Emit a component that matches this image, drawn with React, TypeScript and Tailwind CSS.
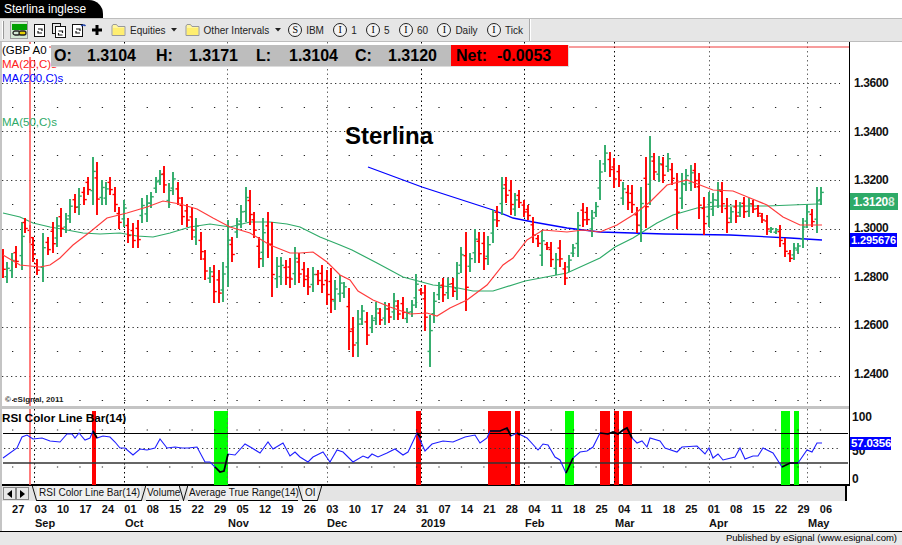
const GREEN = "#2eaa68"
const RED = "#ff0000"
const BLUE = "#0000ff"

// bars in page pixels: colour, x, top, bottom
const bars: [string, number, number, number][] = [
  ["R",3,249,278],["G",7,262,283],["G",12,253,278],["R",16,246,268],["G",22,222,270],["R",25,218,233],["R",30,225,243],
  ["R",33,237,262],["R",37,259,275],["G",43,233,282],["R",48,237,255],["R",53,222,253],["G",57,217,247],["R",61,208,237],
  ["G",66,213,233],["G",70,199,223],["R",75,194,213],["G",79,188,215],["R",84,187,205],["R",88,177,195],["G",93,157,205],
  ["R",97,162,215],["G",102,180,205],["G",106,182,205],["R",110,177,195],["R",115,187,212],["R",119,207,229],["G",124,200,227],
  ["R",128,218,243],["R",133,223,248],["R",138,220,248],["G",142,198,223],["G",147,195,222],["G",151,192,208],["G",156,177,193],
  ["G",160,170,185],["R",164,166,193],["G",169,183,208],["G",173,172,195],["R",178,182,205],["R",182,197,225],["R",187,204,227],
  ["R",192,207,240],["G",196,218,245],["R",201,232,260],["R",205,250,280],["G",210,267,283],["R",214,265,303],["R",219,270,303],
  ["G",223,262,302],["G",228,220,287],["R",232,237,262],["G",237,218,238],["G",241,205,228],["G",246,187,222],["R",250,190,225],
  ["R",254,212,238],["R",259,237,268],["G",263,218,267],["R",268,212,258],["R",272,222,297],["G",277,257,288],["G",281,257,285],
  ["R",286,260,285],["R",290,258,288],["G",295,247,285],["R",299,253,283],["R",304,262,287],["R",308,268,295],["G",313,267,292],
  ["R",318,270,285],["R",322,265,293],["R",327,270,305],["R",331,268,313],["G",335,280,310],["G",340,275,302],["G",344,282,298],
  ["R",349,288,350],["R",353,317,357],["G",358,310,357],["G",362,305,325],["R",367,312,345],["G",372,315,333],["G",376,302,325],
  ["R",380,308,325],["G",385,302,325],["R",389,303,323],["G",394,293,320],["R",398,300,320],["R",403,297,319],["G",407,308,323],
  ["G",412,300,317],["G",416,274,308],["R",421,288,295],["R",425,285,331],["G",430,315,367],["G",434,292,323],["G",439,282,300],
  ["R",443,278,302],["G",448,278,299],["R",453,278,297],["G",457,262,300],["G",461,247,273],["R",466,232,311],["G",470,253,272],
  ["G",475,229,263],["R",479,232,263],["R",484,232,270],["G",488,236,265],["G",493,210,243],["R",497,206,227],["G",502,177,215],
  ["R",506,177,203],["R",511,180,215],["G",515,193,216],["R",519,190,208],["R",524,200,217],["R",528,205,220],["R",533,217,243],
  ["R",538,235,247],["G",542,230,266],["R",547,242,250],["R",551,242,267],["G",556,253,275],["R",560,240,267],["R",565,262,285],
  ["G",569,255,272],["G",573,244,257],["G",578,212,257],["R",583,203,227],["R",587,207,225],["G",592,210,237],["G",596,202,217],
  ["G",600,160,200],["G",605,145,172],["R",610,152,177],["R",614,158,188],["R",619,165,187],["G",623,182,205],["R",628,185,210],
  ["R",632,185,213],["R",637,207,233],["G",641,187,242],["R",646,157,228],["G",650,136,205],["R",654,153,180],["G",659,156,182],
  ["R",663,157,183],["G",668,153,172],["R",672,163,185],["R",677,173,229],["G",682,173,209],["G",686,169,191],["G",691,165,191],
  ["R",695,163,188],["R",699,173,219],["R",704,197,235],["G",709,192,227],["G",713,193,216],["G",718,182,208],["R",722,182,213],
  ["R",727,198,233],["G",731,207,223],["R",736,200,223],["G",740,202,217],["R",744,197,218],["G",749,198,217],["R",753,200,213],
  ["R",758,205,217],["R",762,213,223],["R",767,215,235],["G",771,227,233],["G",776,228,234],["R",780,225,247],["R",785,238,257],
  ["R",790,250,262],["G",794,243,260],["G",798,243,253],["G",803,218,248],["G",807,205,228],["R",812,209,227],["G",817,187,233],
  ["G",821,187,205],
]

const ma20 = "3,255 20,265 40,267 50,265 60,258 73,245 90,232 107,218 127,213 147,207 163,201 180,204 197,209 213,218 230,227 250,233 270,245 290,253 300,253 313,252 327,262 340,275 350,280 358,291 373,300 390,307 410,314 427,313 437,316 450,308 467,300 487,285 503,265 513,258 527,240 543,230 567,232 583,230 600,232 617,225 633,215 650,202 667,185 687,180 700,185 713,190 733,191 750,198 767,205 783,217 800,225 822,225"
const ma50 = "3,213 20,217 33,223 50,227 67,230 83,233 100,234 120,233 137,236 153,237 170,233 190,227 210,224 230,227 250,222 270,222 287,224 300,227 320,237 340,245 352,250 377,263 403,277 433,285 453,287 473,291 493,291 525,281 567,273 600,258 615,247 633,238 657,223 673,215 697,208 717,206 767,206 817,204 822,204"
const ma200 = "368,167 422,187 493,210 513,218 533,222 567,228 600,232 665,234 730,235 790,238 822,240"

const rsi = "3,458 17,448 22,437 27,435 33,439 42,438 50,441 60,442 67,434 72,434 75,438 79,433 85,440 90,438 93,431 97,438 103,436 110,437 115,442 120,448 125,448 133,455 140,449 147,450 155,448 160,439 167,448 175,447 182,448 188,448 197,447 205,462 210,462 215,467 220,472 224,471 228,454 235,455 245,444 252,448 260,453 268,442 273,449 283,443 290,456 295,452 300,457 308,462 313,457 323,452 330,462 337,450 343,452 353,462 363,456 368,458 372,454 378,457 387,453 395,449 403,455 408,452 417,433 425,451 432,444 443,441 453,442 465,437 475,435 480,443 487,438 490,431 500,431 507,428 511,436 517,433 527,438 538,450 543,444 548,445 555,457 560,460 566,473 573,458 580,452 587,451 593,447 600,433 608,434 613,432 618,434 627,428 632,438 637,443 642,441 647,447 650,438 660,441 665,448 677,452 682,447 697,446 705,454 709,448 713,458 718,454 723,460 735,457 740,448 745,459 753,456 758,456 763,448 773,453 782,467 790,463 798,463 807,450 812,452 817,443 822,443"
const rsiBlack = [
  "93,431 97,438",
  "215,467 220,472 224,471 228,454",
  "417,433 421,438",
  "490,431 500,431 507,428 511,436",
  "517,433 520,435",
  "566,473 573,458",
  "600,433 608,434 613,432 618,434 623,430 627,428 632,438",
  "782,467 790,463 798,463",
]

const verticals: [number, string][] = [[34,"#000"],[124,"#000"],[227,"#666"],[327,"#666"],[421,"#000"],[524,"#000"],[614,"#000"],[709,"#666"],[807,"#666"]]
const majors = [83, 131, 180, 229, 277, 327, 376]
const minors = [107, 155, 204, 253, 302, 351, 400]
const shades: [number, number, string][] = [
  [92,4,RED],[214,14,"#00ff00"],[416,5,RED],[488,23,RED],[515,5,RED],[565,9,"#00ff00"],[600,10,RED],[614,5,RED],[623,9,RED],[781,9,"#00ff00"],[794,5,"#00ff00"],
]

const prices = ["1.3600","1.3400","1.3200","1.3000","1.2800","1.2600","1.2400"]
const dates = ["27","03","10","17","24","01","08","15","22","29","05","12","19","26","03","10","17","24","31","07","14","21","28","04","11","18","25","04","11","18","25","01","08","15","22","29","06"]
const months = [
  { label: "Sep", w: "w-[90px]" },
  { label: "Oct", w: "w-[103px]" },
  { label: "Nov", w: "w-[99px]" },
  { label: "Dec", w: "w-[94px]" },
  { label: "2019", w: "w-[104px]" },
  { label: "Feb", w: "w-[90px]" },
  { label: "Mar", w: "w-[94px]" },
  { label: "Apr", w: "w-[99px]" },
  { label: "May", w: "w-[60px]" },
]

function MainPlot() {
  return (
    <svg width={847} height={364} viewBox="2 42 847 364" className="block">
      {majors.map((y) => (
        <line key={y} x1={2} x2={840} y1={y + 0.5} y2={y + 0.5} stroke="#333" strokeDasharray="1.3 3.2" />
      ))}
      {minors.map((y) => (
        <line key={y} x1={12} x2={824} y1={y + 0.5} y2={y + 0.5} stroke="#222" strokeDasharray="1.3 21.14" />
      ))}
      {verticals.map(([x, c]) => (
        <line key={x} x1={x + 0.5} x2={x + 0.5} y1={42} y2={406} stroke={c} strokeDasharray="1.5 3" />
      ))}
      <line x1={2} x2={849} y1={47} y2={47} stroke="#f03a3a" strokeWidth={1.2} />
      <polyline points={ma50} fill="none" stroke={GREEN} strokeWidth={1.2} />
      <polyline points={ma200} fill="none" stroke={BLUE} strokeWidth={1.3} />
      {bars.map(([c, x, top, bottom], i) => {
        const h = bottom - top
        const col = c === "G" ? GREEN : RED
        const openY = c === "G" ? bottom - h * 0.3 : top + h * 0.3
        const closeY = c === "G" ? top + h * 0.3 : bottom - h * 0.3
        return (
          <g key={i} stroke={col}>
            <line x1={x} x2={x} y1={top} y2={bottom} strokeWidth={1.9} />
            <line x1={x - 2.5} x2={x} y1={openY} y2={openY} strokeWidth={1.4} />
            <line x1={x} x2={x + 2.8} y1={closeY} y2={closeY} strokeWidth={1.4} />
          </g>
        )
      })}
      <polyline points={ma20} fill="none" stroke="#ff3b3b" strokeWidth={1.2} />
      <line x1={30} x2={30} y1={42} y2={406} stroke="#ff5a5a" strokeWidth={1.6} />
    </svg>
  )
}

function RsiPlot() {
  return (
    <svg width={847} height={80} viewBox="2 406 847 80" className="block">
      {shades.map(([x, w, c]) => (
        <rect key={x} x={x} y={411} width={w} height={74} fill={c} />
      ))}
      {verticals.map(([x, c]) => (
        <line key={x} x1={x + 0.5} x2={x + 0.5} y1={409} y2={485} stroke={c} strokeDasharray="1.5 3" />
      ))}
      <line x1={30} x2={30} y1={409} y2={485} stroke="#ff5a5a" strokeWidth={1.6} />
      <line x1={12} x2={824} y1={430} y2={430} stroke="#222" strokeDasharray="1.3 21.14" />
      <line x1={12} x2={824} y1={467} y2={467} stroke="#222" strokeDasharray="1.3 21.14" />
      <line x1={4} x2={840} y1={448.5} y2={448.5} stroke="#333" strokeDasharray="1.3 3.2" />
      <line x1={3} x2={848} y1={433.5} y2={433.5} stroke="#000" />
      <line x1={3} x2={848} y1={463} y2={463} stroke="#333" strokeWidth={1.4} />
      <polyline points={rsi} fill="none" stroke="#1f1fff" strokeWidth={1.1} />
      {rsiBlack.map((p) => (
        <polyline key={p} points={p} fill="none" stroke="#000" strokeWidth={1.7} />
      ))}
    </svg>
  )
}

function Folder() {
  return (
    <svg width={15} height={14} viewBox="0 0 15 14">
      <path d="M1 3 L1 12.5 L14 12.5 L14 3.5 L7 3.5 L5.5 1.5 L2 1.5 Z" fill="#fff6a0" stroke="#9a9a9a" />
      <rect x={2} y={5} width={11} height={7} fill="#ffee70" />
    </svg>
  )
}

function Caret() {
  return (
    <svg width={6} height={4} viewBox="0 0 6 4">
      <path d="M0 0 H6 L3 3.5 Z" fill="#222" />
    </svg>
  )
}

function DocIcon({ stacked, tag }: { stacked?: boolean; tag?: boolean }) {
  return (
    <svg width={15} height={15} viewBox="0 0 15 15" fill="none" stroke="#111">
      {stacked && <rect x={0.5} y={0.5} width={8} height={10} fill="#e8e8e8" />}
      <rect x={stacked ? 3.5 : 1.5} y={stacked ? 3.5 : 1.5} width={10} height={stacked ? 11 : 12} fill="#fff" />
      <path d="M5 6 L9 6 L9 8 M9 10 L5 10 L5 8" strokeWidth={1.2} transform={stacked ? "translate(1.5,2)" : ""} />
      {tag && <path d="M10 3 Q13 1 14.5 3" stroke="#2244aa" strokeWidth={1.4} />}
    </svg>
  )
}

function CircleBtn({ ch, label }: { ch: string; label: string }) {
  return (
    <div className="flex items-center gap-[4px]">
      <div className="flex h-[14px] w-[14px] items-center justify-center rounded-full border border-[#222] bg-[#f4f4f4] font-['Liberation_Serif',serif] text-[10px] leading-none text-black">
        {ch}
      </div>
      <span className="text-[10px] text-[#222]">{label}</span>
    </div>
  )
}

function Toolbar() {
  return (
    <div className="flex h-[24px] items-center border-y border-[#bdbdbd] bg-[#e6e6e6] pl-[2px]">
      <div className="h-[18px] w-[2px] border-x border-l-white border-r-[#999]" />
      <div className="ml-[6px] flex h-[18px] w-[18px] flex-col items-center border border-[#999] bg-[#d4e8d4] pt-[2px]">
        <div className="h-[6px] w-[15px] bg-[#00a000]" />
        <svg width={15} height={6} viewBox="0 0 15 6">
          <rect x={1} y={1} width={7} height={4} rx={2} fill="none" stroke="#222" strokeWidth={1.3} />
          <rect x={7} y={1} width={7} height={4} rx={2} fill="#e6d000" stroke="#222" strokeWidth={1.3} />
        </svg>
      </div>
      <div className="ml-[5px] flex items-center gap-[4px]">
        <DocIcon />
        <DocIcon stacked />
        <DocIcon tag />
      </div>
      <svg width={12} height={12} viewBox="0 0 12 12" className="ml-[5px]">
        <path d="M6 1 V11 M1 6 H11" stroke="#000" strokeWidth={3} />
      </svg>
      <div className="ml-[8px]"><Folder /></div>
      <span className="ml-[4px] text-[10px] text-[#222]">Equities</span>
      <div className="ml-[5px]"><Caret /></div>
      <div className="ml-[8px]"><Folder /></div>
      <span className="ml-[4px] text-[10px] text-[#222]">Other Intervals</span>
      <div className="ml-[6px]"><Caret /></div>
      <div className="ml-[7px] flex items-center gap-[9.3px]">
        <CircleBtn ch="S" label="IBM" />
        <CircleBtn ch="I" label="1" />
        <CircleBtn ch="I" label="5" />
        <CircleBtn ch="I" label="60" />
        <CircleBtn ch="I" label="Daily" />
        <CircleBtn ch="I" label="Tick" />
      </div>
      <div className="ml-[6px] h-full w-[2px] border-l border-[#aaa] bg-white" />
    </div>
  )
}

function Quote({ k, v, w }: { k: string; v: string; w: string }) {
  return (
    <div className={`flex ${w}`}>
      <span className="w-[33px]">{k}</span>
      <span>{v}</span>
    </div>
  )
}

function Slant({ up }: { up?: boolean }) {
  return (
    <svg width={5} height={15} viewBox="0 0 5 15" className="shrink-0">
      <line x1={0.3} y1={up ? 15 : 0} x2={4.7} y2={up ? 0 : 15} stroke="#111" />
    </svg>
  )
}

function ArrowBtn({ left }: { left?: boolean }) {
  return (
    <div className="flex h-[13px] w-[13px] items-center justify-center border border-[#888] bg-[#e8e8e8]">
      <svg width={5} height={8} viewBox="0 0 5 8">
        <path d={left ? "M5 0 V8 L0 4 Z" : "M0 0 V8 L5 4 Z"} fill="#000" />
      </svg>
    </div>
  )
}

export default function App() {
  return (
    <div className="h-[545px] w-[902px] overflow-hidden bg-white font-['Liberation_Sans',sans-serif] text-black">
      <div className="h-[18px]">
        <div className="flex h-[18px] w-[103px] items-center rounded-tr-[14px] bg-black pl-[4px] text-[12px] text-white">
          Sterlina inglese
        </div>
      </div>
      <Toolbar />

      <div className="border-l-2 border-[#c4c4c4]">
        {/* price panel */}
        <div className="flex h-[364px]">
          <div className="relative w-[847px]">
            <MainPlot />
            <div className="absolute left-0 top-[2px] bg-white pr-[2px] text-[11.5px] leading-[13px]">(GBP A0</div>
            <div className="absolute left-0 top-[16px] text-[11.5px] leading-[13px] text-[#ff2020]">MA(20,C)s</div>
            <div className="absolute left-0 top-[30px] text-[11.5px] leading-[13px] text-[#0000ff]">MA(200,C)s</div>
            <div className="absolute left-0 top-[74px] text-[11.5px] leading-[13px] text-[#2eaa68]">MA(50,C)s</div>
            <div className="absolute left-[49px] top-[3px] flex h-[22px] border-b border-r border-[#dcdcdc] text-[16px] font-bold leading-[22px]">
              <div className="flex w-[400px] bg-[#bdbdbd] pl-[3px]">
                <Quote k="O:" v="1.3104" w="w-[102px]" />
                <Quote k="H:" v="1.3171" w="w-[100px]" />
                <Quote k="L:" v="1.3104" w="w-[99px]" />
                <Quote k="C:" v="1.3120" w="w-[96px]" />
              </div>
              <div className="flex w-[117px] bg-[#ff0000] pl-[5px]">
                <span className="w-[41px]">Net:</span>
                <span>-0.0053</span>
              </div>
            </div>
            <div className="absolute left-[343px] top-[81px] text-[24px] font-bold leading-[26px]">Sterlina</div>
            <div className="absolute bottom-[1px] left-[3px] text-[8px] font-bold leading-[10px] text-[#222]">© eSignal, 2011</div>
          </div>
          <div className="relative w-[53px] border-l border-black pl-[4px] pt-[17px]">
            {prices.map((p) => (
              <div key={p} className="flex h-[48.4px] items-center text-[12px] font-bold tracking-[-0.4px] text-[#111]">{p}</div>
            ))}
            <div className="absolute left-0 top-[151px] flex h-[17px] w-[48px] items-center bg-[#2eaa68] pl-[3px] text-[12px] font-bold tracking-[-0.3px] text-white">
              1.3120<span className="text-[#cfe8da]">8</span>
            </div>
            <div className="absolute left-0 top-[191px] flex h-[14px] w-[47px] items-center bg-[#0000ff] pl-[1px] text-[11px] font-bold tracking-[-0.1px] text-white">
              1.295676
            </div>
          </div>
        </div>

        {/* RSI panel */}
        <div className="flex h-[80px]">
          <div className="relative w-[847px] border-b-2 border-black">
            <RsiPlot />
            <div className="absolute left-0 top-[5px] text-[11.7px] font-bold leading-[14px]">RSI Color Line Bar(14)</div>
            <div className="absolute left-0 right-0 top-0 h-[3px] bg-[#c4c4c4]" />
          </div>
          <div className="relative w-[53px] border-l border-black pl-[1px]">
            <div className="absolute left-[2px] top-[4px] text-[12px] font-bold leading-[14px] text-[#111]">100</div>
            <div className="absolute left-[2px] top-[38px] text-[12px] font-bold leading-[14px] text-[#111]">50</div>
            <div className="absolute left-[2px] top-[66px] text-[12px] font-bold leading-[14px] text-[#111]">0</div>
            <div className="absolute left-0 top-[31px] flex h-[13px] w-[41px] items-center bg-[#0000ff] pl-[1px] text-[11.5px] font-bold tracking-[-0.2px] text-white">
              57.0356
            </div>
          </div>
        </div>

        {/* study tabs */}
        <div className="flex h-[15px] w-[845px] items-center border-r-2 border-black bg-[#e4e4e4] pl-[1px] text-[10px] leading-[14px] text-[#111]">
          <ArrowBtn left />
          <ArrowBtn />
          <div className="ml-[3px] flex h-[15px] whitespace-nowrap">
            <Slant />
            <div className="w-[104px] border-b border-black bg-[#f0f0f0] pl-[2px]">RSI Color Line Bar(14)</div>
            <Slant up />
            <div className="w-[33px] border-b border-black bg-[#f0f0f0] pl-[1px]">Volume</div>
            <Slant />
            <div className="-ml-[1px]"><Slant up /></div>
            <div className="w-[110px] border-b border-black bg-[#f0f0f0] pl-[1px]">Average True Range(14)</div>
            <Slant />
            <div className="w-[14px] border-b border-black bg-[#f0f0f0] pl-[2px]">OI</div>
            <Slant up />
          </div>
        </div>

        {/* date axis */}
        <div className="flex h-[15px] items-center pl-[5px] pt-[2px] text-[11px] font-bold text-[#111]">
          {dates.map((d, i) => (
            <div key={i} className="w-[22.44px] shrink-0 text-center">{d}</div>
          ))}
        </div>
        <div className="flex h-[15px] items-start pl-[33px] text-[11px] font-bold leading-[14px] text-[#111]">
          {months.map((m) => (
            <div key={m.label} className={`${m.w} shrink-0`}>{m.label}</div>
          ))}
        </div>
      </div>

      <div className="flex h-[14px] items-center justify-end border-t border-black bg-[#e8e8e8] pr-[5px] text-[9.5px] text-black">
        Published by eSignal (www.esignal.com)
      </div>
    </div>
  )
}
